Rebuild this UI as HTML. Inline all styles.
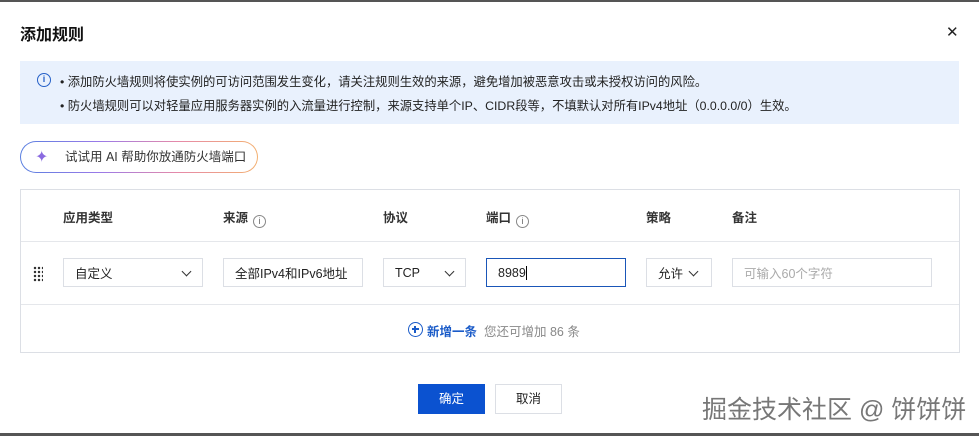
<!DOCTYPE html>
<html><head><meta charset="utf-8"><style>
*{box-sizing:border-box;margin:0;padding:0}
body{width:979px;height:436px;background:#fff;font-family:"Liberation Sans","Noto Sans CJK SC",sans-serif;position:relative;overflow:hidden;color:#000;font-size:12px}
.abs{position:absolute}
.box{position:absolute;border:1px solid #dcdfe5;background:#fff;height:29px;top:258px;display:flex;align-items:center;padding-left:11px;font-size:12.5px;color:#222}
.chev{position:absolute;right:12px;top:9px;width:7px;height:7px;border-right:1.5px solid #333;border-bottom:1.5px solid #333;transform:rotate(45deg)}
.th{position:absolute;top:207px;font-size:12.5px;font-weight:bold;color:#333}
.info{display:inline-block;width:13px;height:13px;border:1px solid #888;border-radius:50%;font-size:9px;text-align:center;line-height:11px;color:#666;font-weight:normal;margin-left:5px;vertical-align:-2px}
</style></head><body>
<div class="abs" style="left:0;top:0;width:979px;height:2px;background:#555"></div>
<div class="abs" style="left:20px;top:21px;font-size:16px;font-weight:bold;color:#111">添加规则</div>
<div class="abs" style="left:946px;top:25px;font-size:15px;color:#222;line-height:15px">✕</div>
<div class="abs" style="left:20px;top:61px;width:939px;height:63px;background:#e9f1fd"></div>
<div class="abs" style="left:37px;top:73px;width:14px;height:14px;border:1.5px solid #2560c8;border-radius:50%;color:#2560c8;font-size:9px;font-weight:bold;text-align:center;line-height:11px">i</div>
<div class="abs" style="left:60px;top:72px;font-size:12.3px;color:#222">• 添加防火墙规则将使实例的可访问范围发生变化，请关注规则生效的来源，避免增加被恶意攻击或未授权访问的风险。</div>
<div class="abs" style="left:60px;top:96px;font-size:12.3px;color:#222">• 防火墙规则可以对轻量应用服务器实例的入流量进行控制，来源支持单个IP、CIDR段等，不填默认对所有IPv4地址（0.0.0.0/0）生效。</div>
<div class="abs" style="left:20px;top:141px;width:238px;height:32px;border-radius:16px;background:linear-gradient(90deg,#5a80e0,#9a7ae8,#e68aa8,#f3b070);padding:1px"><div style="width:100%;height:100%;background:#fff;border-radius:15px;padding-left:44px;line-height:30px;font-size:12.5px;color:#333">试试用 AI 帮助你放通防火墙端口</div></div>
<div class="abs" style="left:35px;top:147px;font-size:16px;color:#8a6ae0">✦</div>
<div class="abs" style="left:20px;top:189px;width:940px;height:164px;border:1px solid #dcdfe5"></div>
<div class="abs" style="left:21px;top:241px;width:938px;height:1px;background:#e5e7eb"></div>
<div class="abs" style="left:21px;top:304px;width:938px;height:1px;background:#e5e7eb"></div>
<div class="th" style="left:63px">应用类型</div>
<div class="th" style="left:223px">来源<span class="info">i</span></div>
<div class="th" style="left:383px">协议</div>
<div class="th" style="left:486px">端口<span class="info">i</span></div>
<div class="th" style="left:646px">策略</div>
<div class="th" style="left:732px">备注</div>
<div class="abs" style="left:33px;top:266px;width:10px;height:16px;background:radial-gradient(circle,#333 1.1px,transparent 1.4px) 0 0/4px 4px"></div>
<div class="box" style="left:63px;width:140px">自定义<span class="chev"></span></div>
<div class="box" style="left:223px;width:140px">全部IPv4和IPv6地址</div>
<div class="box" style="left:383px;width:83px">TCP<span class="chev"></span></div>
<div class="box" style="left:486px;width:140px;border-color:#1a56b8">8989<span style="display:inline-block;width:1px;height:14px;background:#000"></span></div>
<div class="box" style="left:646px;width:66px">允许<span class="chev" style="right:14px"></span></div>
<div class="box" style="left:732px;width:200px;color:#aaa">可输入60个字符</div>
<div class="abs" style="left:408px;top:322px;width:15px;height:15px;border:1.5px solid #1a5bc8;border-radius:50%"><div style="position:absolute;left:2.5px;top:5.25px;width:7px;height:1.5px;background:#1a5bc8"></div><div style="position:absolute;left:5.25px;top:2.5px;width:1.5px;height:7px;background:#1a5bc8"></div></div>
<div class="abs" style="left:427px;top:321px;font-size:12.5px;color:#1a5bc8;font-weight:bold">新增一条</div>
<div class="abs" style="left:484px;top:321px;font-size:12.5px;color:#888">您还可增加 86 条</div>
<div class="abs" style="left:418px;top:384px;width:67px;height:30px;background:#0b52d0;color:#fff;font-size:12.5px;text-align:center;line-height:30px">确定</div>
<div class="abs" style="left:495px;top:384px;width:67px;height:30px;border:1px solid #dcdfe5;color:#222;font-size:12.5px;text-align:center;line-height:28px">取消</div>
<div class="abs" style="left:702px;top:390px;font-size:25px;color:#777;text-shadow:0 0 2px #fff,1px 1px 0 #fff;white-space:nowrap">掘金技术社区 @ 饼饼饼</div>
<div class="abs" style="left:0;top:433px;width:979px;height:3px;background:#555"></div>
</body></html>
